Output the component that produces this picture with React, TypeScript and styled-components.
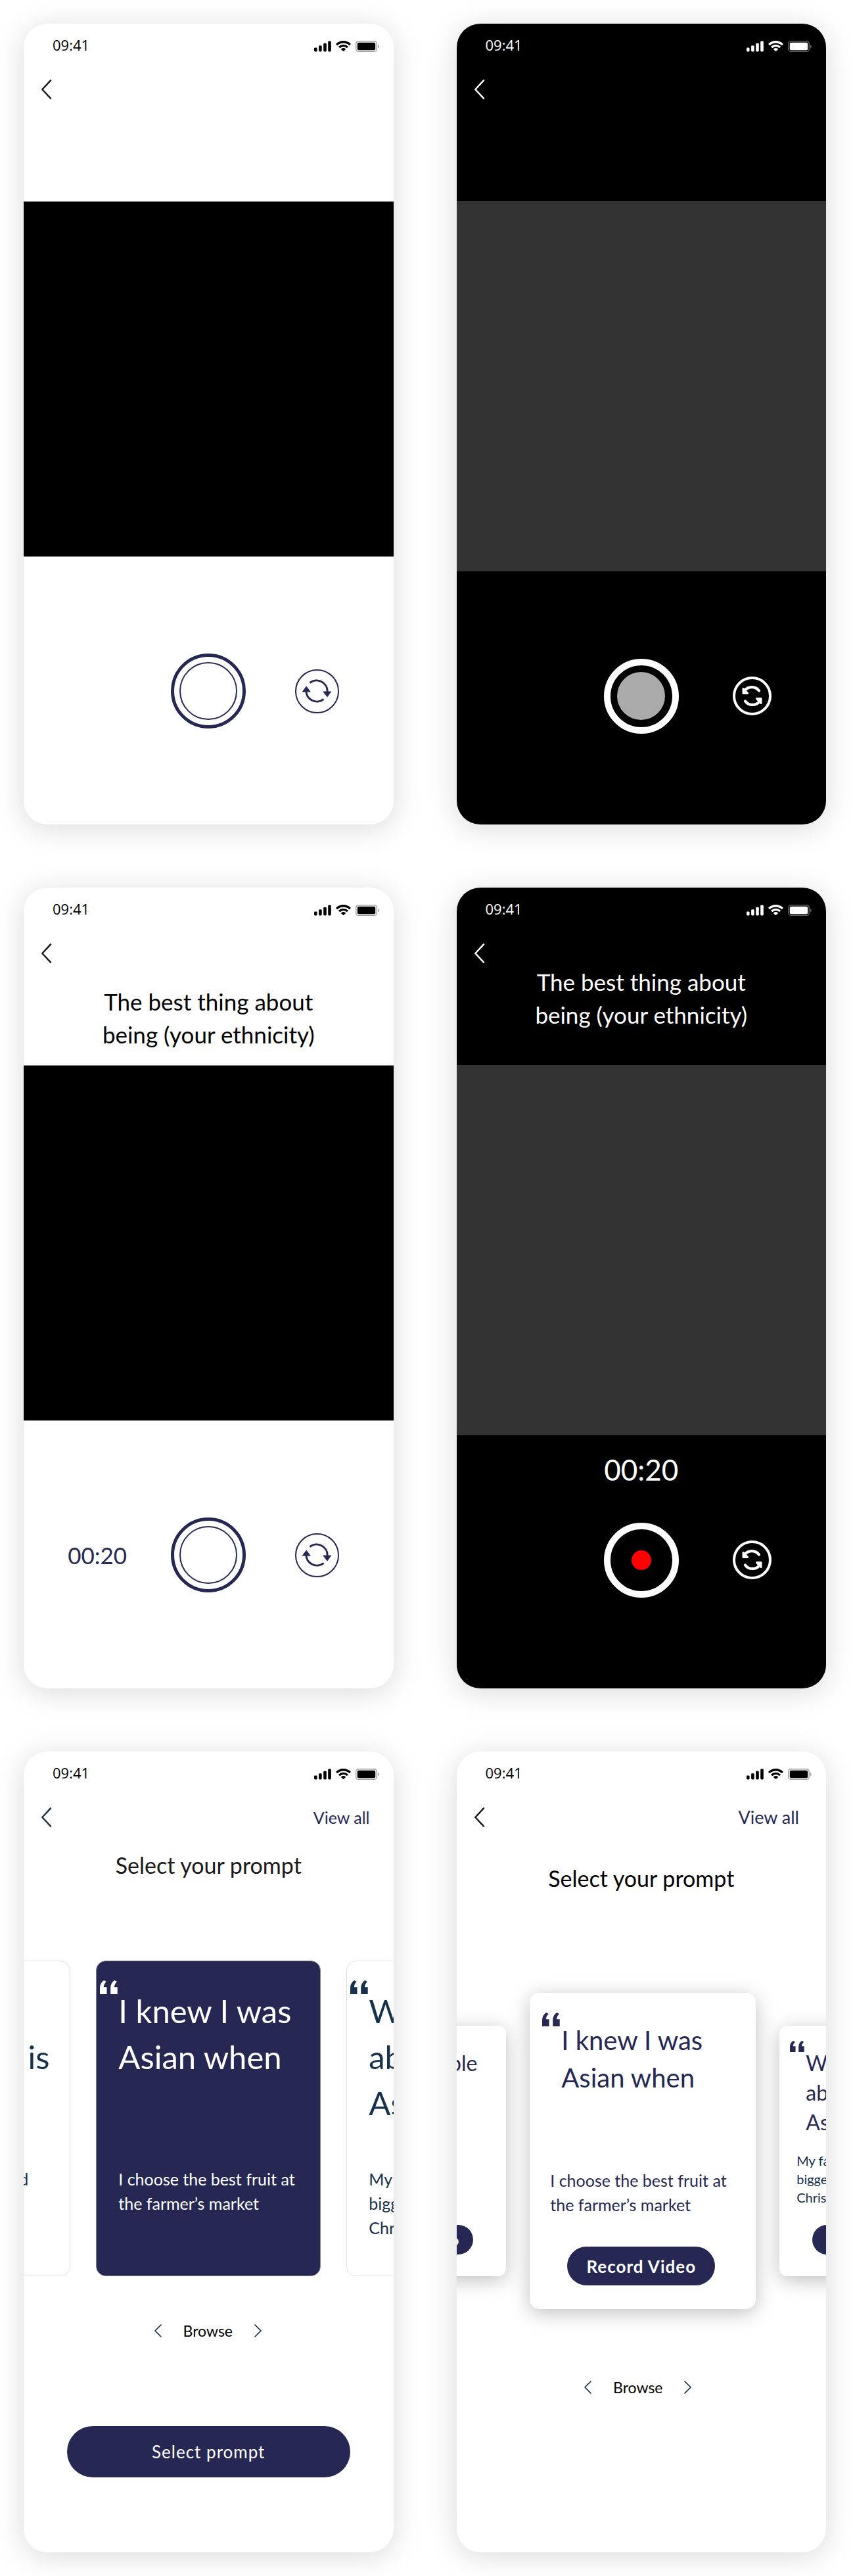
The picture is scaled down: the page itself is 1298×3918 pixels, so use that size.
import React from "react";
import styled, { createGlobalStyle, css } from "styled-components";

const INDIGO = "#262853";
const NAVY = "#17304b";

const GlobalStyle = createGlobalStyle`
  *, *::before, *::after { box-sizing: border-box; }
  body { margin: 0; background: #fff; font-family: Lato, "Open Sans", sans-serif; }
  h2, h3, p { margin: 0; font-weight: 400; }
  button { margin: 0; padding: 0; border: 0; background: none; color: inherit; font: inherit; cursor: pointer; }
  a { color: inherit; text-decoration: none; }
  svg { display: block; }
`;

/* ---------- page and device frame ---------- */

const Board = styled.main`
  display: grid;
  grid-template-columns: 1fr 1fr;
  gap: 96px;
  padding: 36px 41px 36px 36px;
`;

const Phone = styled.section<{ $dark?: boolean }>`
  display: flex;
  flex-direction: column;
  min-width: 0;
  aspect-ratio: 375 / 812;
  overflow: hidden;
  border-radius: 36px;
  background: ${(p) => (p.$dark ? "#000" : "#fff")};
  color: ${(p) => (p.$dark ? "#fff" : "#000")};
  box-shadow: 0 6px 45px rgba(0, 0, 0, 0.15);
`;

const StatusBar = styled.div`
  display: flex;
  justify-content: space-between;
  align-items: flex-end;
  flex: none;
  height: 47px;
  padding: 0 22px 0 44px;
`;

const Clock = styled.time`
  font: 400 22px/30px "Open Sans", sans-serif;
`;

const StatusIcons = styled.div`
  display: flex;
  gap: 7px;
  padding-bottom: 4px;
`;

const NavBar = styled.nav<{ $end?: number }>`
  display: flex;
  justify-content: space-between;
  align-items: flex-end;
  flex: none;
  height: 69px;
  padding: 0 ${(p) => p.$end ?? 36}px 1px 26px;
`;

const BackButton = styled.button<{ $color?: string }>`
  color: ${(p) => p.$color ?? "inherit"};
`;

const ViewAll = styled.a<{ $large?: boolean }>`
  color: ${INDIGO};
  font-size: ${(p) => (p.$large ? 27 : 25)}px;
  line-height: 30px;
`;

/* ---------- camera screens ---------- */

const PromptArea = styled.div<{ $raised?: boolean }>`
  flex: none;
  height: 154px;
  padding-top: ${(p) => (p.$raised ? 2 : 32)}px;
  text-align: center;
`;

const PromptTitle = styled.h2`
  font-size: 35px;
  line-height: 50px;
`;

const Viewfinder = styled.div<{ $dark?: boolean }>`
  flex: none;
  ${(p) =>
    p.$dark
      ? css`
          aspect-ratio: 1;
          background: #333;
        `
      : css`
          height: 541px;
          border: solid #808080;
          border-width: 1px 0;
          background: #000;
        `}
`;

const TimerSlot = styled.div<{ $dark?: boolean }>`
  flex: none;
  height: ${(p) => (p.$dark ? 133 : 147)}px;
  padding-top: 25px;
  text-align: center;
`;

const Timer = styled.span<{ $large?: boolean }>`
  font-size: ${(p) => (p.$large ? 44 : 35)}px;
  line-height: 54px;
`;

const Controls = styled.div`
  display: grid;
  grid-template-columns: 1fr auto 1fr;
  align-items: center;
  justify-items: center;
  color: ${INDIGO};
`;

const Shutter = styled.button<{ $dark?: boolean }>`
  display: grid;
  place-items: center;
  grid-column: 2;
  width: 114px;
  height: 114px;
  border: ${(p) => (p.$dark ? "10px solid #fff" : `5px solid ${INDIGO}`)};
  border-radius: 50%;
`;

const ShutterCore = styled.span<{ $kind: "ring" | "idle" | "recording" }>`
  border-radius: 50%;
  ${(p) =>
    ({
      ring: css`
        width: 88px;
        height: 88px;
        border: 2px solid ${INDIGO};
      `,
      idle: css`
        width: 73px;
        height: 73px;
        background: #aaa;
      `,
      recording: css`
        width: 30px;
        height: 30px;
        background: #f00;
      `,
    })[p.$kind]}
`;

const FlipButton = styled.button<{ $dark?: boolean }>`
  display: grid;
  place-items: center;
  grid-column: 3;
  border-radius: 50%;
  ${(p) =>
    p.$dark
      ? css`
          width: 59px;
          height: 59px;
          border: 4px solid #fff;
          color: #fff;
        `
      : css`
          width: 67px;
          height: 67px;
          margin-right: 8px;
          border: 2px solid ${INDIGO};
        `}
`;

/* ---------- prompt picker screens ---------- */

const PickerTitle = styled.h2<{ $low?: boolean }>`
  flex: none;
  padding-top: ${(p) => (p.$low ? 52 : 32)}px;
  color: ${(p) => (p.$low ? "#000" : "#1a1a1a")};
  font-size: 34px;
  line-height: 50px;
  text-align: center;
`;

const Carousel = styled.div<{ $raised?: boolean }>`
  display: flex;
  justify-content: center;
  align-items: center;
  flex: none;
  gap: ${(p) => (p.$raised ? 36 : 39)}px;
  margin-top: ${(p) => (p.$raised ? 149 : 120)}px;
  padding-left: ${(p) => (p.$raised ? 5 : 0)}px;
`;

const FlatCard = styled.article<{ $active?: boolean }>`
  display: grid;
  grid-template-columns: 28px 1fr;
  grid-template-rows: 284px 1fr;
  flex: none;
  width: 342px;
  height: 480px;
  padding: 29px 0 0 5px;
  border: 1px solid ${(p) => (p.$active ? "#85858f" : "#e0e0e0")};
  border-radius: 15px;
  background: ${(p) => (p.$active ? INDIGO : "#fff")};
  color: ${(p) => (p.$active ? "#fff" : NAVY)};
`;

const FlatTitle = styled.h3`
  padding-top: 11px;
  font-size: 49px;
  line-height: 70px;
  white-space: nowrap;
`;

const FlatBody = styled.p`
  grid-column: 2;
  font-size: 25px;
  line-height: 37px;
  white-space: nowrap;
`;

type CardSize = { $small?: boolean };

const RaisedCard = styled.article<CardSize>`
  display: grid;
  flex: none;
  align-content: start;
  border-radius: ${(p) => (p.$small ? 12 : 15)}px;
  background: #fff;
  color: ${INDIGO};
  box-shadow: 0 6px 30px rgba(0, 0, 0, 0.25);
  ${(p) =>
    p.$small
      ? css`
          grid-template-columns: 24px 1fr;
          grid-template-rows: 168px 84px;
          width: 273px;
          height: 381px;
          padding: 23px 0 0 16px;
        `
      : css`
          grid-template-columns: 29px 1fr;
          grid-template-rows: 237px 74px;
          width: 344px;
          height: 481px;
          padding: 30px 0 0 19px;
        `}
`;

const RaisedTitle = styled.h3<CardSize>`
  padding-top: ${(p) => (p.$small ? 11 : 14)}px;
  font-size: ${(p) => (p.$small ? 32 : 40)}px;
  line-height: ${(p) => (p.$small ? 45 : 57)}px;
  white-space: nowrap;
`;

const RaisedBody = styled.p<CardSize>`
  grid-column: 1 / -1;
  padding-left: ${(p) => (p.$small ? 10 : 12)}px;
  color: ${(p) => (p.$small ? NAVY : INDIGO)};
  font-size: ${(p) => (p.$small ? 20 : 25)}px;
  line-height: ${(p) => (p.$small ? 28 : 37)}px;
  white-space: nowrap;
`;

const RecordButton = styled.button<CardSize>`
  grid-column: 1 / -1;
  margin-top: ${(p) => (p.$small ? 28 : 45)}px;
  margin-left: ${(p) => (p.$small ? 34 : 38)}px;
  width: ${(p) => (p.$small ? 173 : 225)}px;
  height: ${(p) => (p.$small ? 45 : 59)}px;
  border-radius: 30px;
  background: ${INDIGO};
  color: #fff;
  font-size: ${(p) => (p.$small ? 20 : 26)}px;
  font-weight: 700;
  letter-spacing: 1px;
`;

const Browse = styled.div<{ $low?: boolean }>`
  display: flex;
  justify-content: center;
  align-items: center;
  flex: none;
  gap: 33px;
  margin-top: ${(p) => (p.$low ? 104 : 68)}px;
  padding-right: ${(p) => (p.$low ? 10 : 2)}px;
  font-size: 23px;
  line-height: 30px;
`;

const BrowseStep = styled.button`
  color: ${NAVY};
`;

const SelectButton = styled.button`
  flex: none;
  height: 78px;
  margin: 130px 66px 0;
  border-radius: 39px;
  background: ${INDIGO};
  color: #fff;
  font-size: 26px;
  letter-spacing: 1px;
`;

/* ---------- icons ---------- */

const SignalIcon = () => (
  <svg width="26" height="17" viewBox="0 0 26 17" fill="currentColor" aria-hidden="true">
    <rect x="0" y="10.5" width="4.6" height="6" rx="1.4" />
    <rect x="7.1" y="7.3" width="4.6" height="9.2" rx="1.4" />
    <rect x="14.2" y="3.8" width="4.6" height="12.7" rx="1.4" />
    <rect x="21.2" y="0.4" width="4.6" height="16.1" rx="1.4" />
  </svg>
);

const WifiIcon = () => (
  <svg width="23" height="17" viewBox="0 0 15.33 11.33" fill="currentColor" aria-hidden="true">
    <path d="M7.67 2.28c2.2 0 4.3.84 5.88 2.35.12.12.31.11.43 0l1.14-1.15a.3.3 0 0 0 0-.44 10.7 10.7 0 0 0-14.9 0 .3.3 0 0 0 0 .44l1.14 1.15c.12.11.31.12.43 0a8.5 8.5 0 0 1 5.88-2.35z" />
    <path d="M7.67 6.03c1.2 0 2.35.45 3.23 1.25.12.11.31.11.43 0l1.14-1.16a.3.3 0 0 0 0-.45 7 7 0 0 0-9.6 0 .3.3 0 0 0 0 .45l1.14 1.16c.12.11.31.11.43 0a4.8 4.8 0 0 1 3.23-1.25z" />
    <path d="M9.9 8.75a.3.3 0 0 0 0-.45 3.4 3.4 0 0 0-4.46 0 .3.3 0 0 0 0 .45l1.98 1.99c.12.12.32.12.44 0z" />
  </svg>
);

const BatteryIcon = () => (
  <svg width="36" height="17" viewBox="0 0 36 17" fill="none" aria-hidden="true">
    <rect x="0.75" y="0.75" width="31.5" height="15.5" rx="3.6" stroke="currentColor" strokeOpacity="0.38" strokeWidth="1.4" />
    <rect x="2.8" y="2.8" width="27.4" height="11.4" rx="1.9" fill="currentColor" />
    <path d="M34 6v5.4c1.1-.5 1.8-1.5 1.8-2.7S35.1 6.5 34 6z" fill="currentColor" fillOpacity="0.4" />
  </svg>
);

const BackIcon = () => (
  <svg width="17" height="30" viewBox="0 0 17 30" fill="none" stroke="currentColor" strokeWidth="2.5" strokeLinecap="round" strokeLinejoin="round" aria-hidden="true">
    <path d="M15 1.3 2.3 15 15 28.7" />
  </svg>
);

const StepIcon = ({ next }: { next?: boolean }) => (
  <svg width="11" height="20" viewBox="0 0 11 20" fill="none" stroke="currentColor" strokeWidth="1.7" strokeLinecap="round" strokeLinejoin="round" aria-hidden="true">
    <path d={next ? "M1 1l9 9-9 9" : "M10 1l-9 9 9 9"} />
  </svg>
);

const QuoteIcon = ({ width = 27 }: { width?: number }) => (
  <svg width={width} height={(width * 21) / 27} viewBox="0 0 27 21" fill="currentColor" aria-hidden="true">
    <path d="M0 21v-9.5C0 6.5 2.2 2.7 6 0l3.800 2C7.300 4.300 6 7 5.800 10.200h4.700V21z" />
    <path d="M16.200 21v-9.5c0-5 2.200-8.800 6-11.500L26 2c-2.500 2.300-3.800 5-4 8.200h4.700V21z" />
  </svg>
);

const RotateIcon = () => (
  <svg width="46" height="38" viewBox="0 0 46 38" fill="none" aria-hidden="true">
    <path d="M12.5 6.500A16.500 16.500 0 0 1 39.200 20" stroke="currentColor" strokeWidth="3" />
    <path d="M33.5 31.500A16.500 16.500 0 0 1 6.800 18" stroke="currentColor" strokeWidth="3" />
    <path d="M32 19.500h13.500L39 28.500z M0.500 20.500H14L7.200 11.500z" fill="currentColor" />
  </svg>
);

const SwapIcon = () => (
  <svg width="33" height="33" viewBox="0 0 33 33" fill="none" stroke="currentColor" strokeWidth="4.2" strokeLinecap="round" strokeLinejoin="round" aria-hidden="true">
    <path d="M27 8.600C21.500 1.200 10.500 1.200 5 8.600" />
    <path d="M3 5.500V12.400h6.500z" fill="currentColor" strokeWidth="3" />
    <path d="M6 24.400c5.500 7.400 16.500 7.400 22 0" />
    <path d="M30 27.500v-6.900h-6.500z" fill="currentColor" strokeWidth="3" />
  </svg>
);

/* ---------- composed parts ---------- */

const Status = () => (
  <StatusBar>
    <Clock>09:41</Clock>
    <StatusIcons>
      <SignalIcon />
      <WifiIcon />
      <BatteryIcon />
    </StatusIcons>
  </StatusBar>
);

const Back = ({ color }: { color?: string }) => (
  <BackButton type="button" aria-label="Back" $color={color}>
    <BackIcon />
  </BackButton>
);

const Lines = ({ text }: { text: string[] }) => (
  <>
    {text.map((line, i) => (
      <React.Fragment key={line}>
        {i > 0 && <br />}
        {line}
      </React.Fragment>
    ))}
  </>
);

const CameraScreen = ({ dark, recording }: { dark?: boolean; recording?: boolean }) => (
  <Phone $dark={dark}>
    <Status />
    <NavBar>
      <Back color={dark ? "#fff" : "#1a1a1a"} />
    </NavBar>
    <PromptArea $raised={dark}>
      {recording && (
        <PromptTitle>
          <Lines text={["The best thing about", "being (your ethnicity)"]} />
        </PromptTitle>
      )}
    </PromptArea>
    <Viewfinder $dark={dark} />
    <TimerSlot $dark={dark}>{dark && recording && <Timer $large>00:20</Timer>}</TimerSlot>
    <Controls>
      {!dark && recording && <Timer>00:20</Timer>}
      <Shutter type="button" aria-label="Record" $dark={dark}>
        <ShutterCore $kind={!dark ? "ring" : recording ? "recording" : "idle"} />
      </Shutter>
      <FlipButton type="button" aria-label="Flip camera" $dark={dark}>
        {dark ? <SwapIcon /> : <RotateIcon />}
      </FlipButton>
    </Controls>
  </Phone>
);

type Prompt = { title: string[]; body: string[] };

const knewPrompt: Prompt = {
  title: ["I knew I was", "Asian when"],
  body: ["I choose the best fruit at", "the farmer’s market"],
};
const familyPrompt: Prompt = {
  title: ["What I love", "about being", "Asian is"],
  body: ["My family has the", "biggest parties at", "Christmas"],
};
const foodPrompt: Prompt = {
  title: ["My secret", "super food is"],
  body: ["My grandmothers said", "it cures anything"],
};
const peoplePrompt: Prompt = {
  title: ["When people", "say to me"],
  body: ["I just smile", "and wave"],
};

const FlatPrompt = ({ prompt, active }: { prompt: Prompt; active?: boolean }) => (
  <FlatCard $active={active}>
    <QuoteIcon />
    <FlatTitle>
      <Lines text={prompt.title} />
    </FlatTitle>
    <FlatBody>
      <Lines text={prompt.body} />
    </FlatBody>
  </FlatCard>
);

const RaisedPrompt = ({ prompt, small }: { prompt: Prompt; small?: boolean }) => (
  <RaisedCard $small={small}>
    <QuoteIcon width={small ? 22 : 27} />
    <RaisedTitle $small={small}>
      <Lines text={prompt.title} />
    </RaisedTitle>
    <RaisedBody $small={small}>
      <Lines text={prompt.body} />
    </RaisedBody>
    <RecordButton type="button" $small={small}>
      Record Video
    </RecordButton>
  </RaisedCard>
);

const BrowseControls = ({ low }: { low?: boolean }) => (
  <Browse $low={low}>
    <BrowseStep type="button" aria-label="Previous prompt">
      <StepIcon />
    </BrowseStep>
    <span>Browse</span>
    <BrowseStep type="button" aria-label="Next prompt">
      <StepIcon next />
    </BrowseStep>
  </Browse>
);

export default function App() {
  return (
    <>
      <GlobalStyle />
      <Board>
        <CameraScreen />
        <CameraScreen dark />
        <CameraScreen recording />
        <CameraScreen dark recording />
        <Phone>
          <Status />
          <NavBar>
            <Back color={NAVY} />
            <ViewAll href="#prompts">View all</ViewAll>
          </NavBar>
          <PickerTitle>Select your prompt</PickerTitle>
          <Carousel>
            <FlatPrompt prompt={foodPrompt} />
            <FlatPrompt prompt={knewPrompt} active />
            <FlatPrompt prompt={familyPrompt} />
          </Carousel>
          <BrowseControls />
          <SelectButton type="button">Select prompt</SelectButton>
        </Phone>
        <Phone>
          <Status />
          <NavBar $end={41}>
            <Back color="#1a1a1a" />
            <ViewAll href="#prompts" $large>
              View all
            </ViewAll>
          </NavBar>
          <PickerTitle $low>Select your prompt</PickerTitle>
          <Carousel $raised>
            <RaisedPrompt prompt={peoplePrompt} small />
            <RaisedPrompt prompt={knewPrompt} />
            <RaisedPrompt prompt={familyPrompt} small />
          </Carousel>
          <BrowseControls low />
        </Phone>
      </Board>
    </>
  );
}
